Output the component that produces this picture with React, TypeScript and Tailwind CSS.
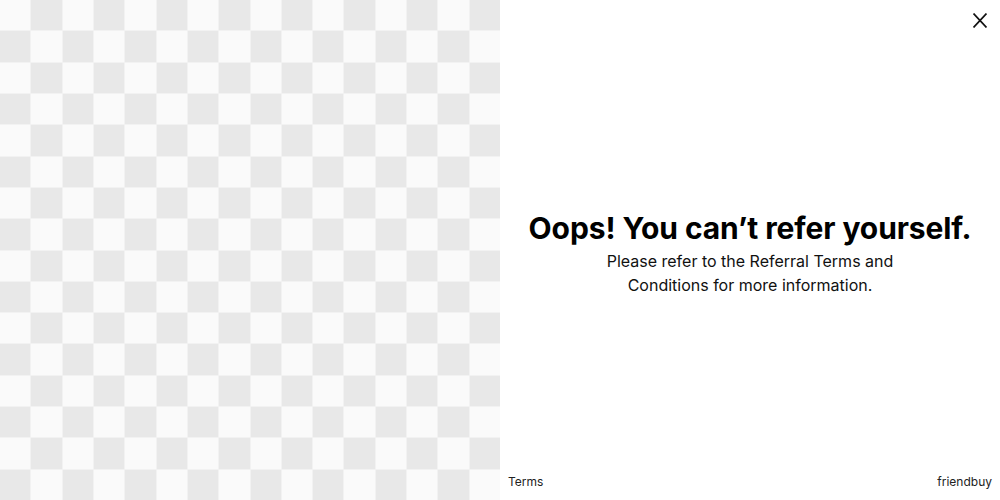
import React from "react";

export default function App() {
  const cells = [];
  for (let r = 0; r < 16; r++) {
    for (let c = 0; c < 16; c++) {
      const gray = (r + c) % 2 === 1;
      cells.push(
        <div key={`${r}-${c}`} className={gray ? "bg-[#e8e8e8]" : "bg-[#fafafa]"} />
      );
    }
  }
  return (
    <div className="flex w-[1000px] h-[500px] bg-white" style={{ fontFamily: "Inter, 'Noto Sans', sans-serif" }}>
      <div className="grid w-[500px] h-[500px] grid-cols-16 grid-rows-16 gap-px bg-[#f2f2f2]">
        {cells}
      </div>
      <div className="flex w-[500px] h-[500px] flex-col bg-white text-[#111]">
        <div className="flex justify-end pt-[13px] pr-[13px]">
          <button className="w-[14px] h-[15px]" aria-label="Close">
            <svg width="14" height="15" viewBox="0 0 14 15">
              <path d="M0.5 0.5 L13.5 14.5 M13.5 0.5 L0.5 14.5" stroke="#111" strokeWidth="1.7" />
            </svg>
          </button>
        </div>
        <div className="flex flex-1 flex-col items-center justify-center text-center pt-[4px]">
          <h1 className="text-[30px] font-bold leading-[36px] text-black tracking-[-0.1px]">
            Oops! You can’t refer yourself.
          </h1>
          <p className="mt-[3px] w-[300px] text-[16px] leading-[24px] text-[#111]">
            Please refer to the Referral Terms and Conditions for more information.
          </p>
        </div>
        <div className="flex justify-between px-2 pb-[11px] text-[12px] leading-[14px] text-[#222]">
          <span>Terms</span>
          <span>friendbuy</span>
        </div>
      </div>
    </div>
  );
}
